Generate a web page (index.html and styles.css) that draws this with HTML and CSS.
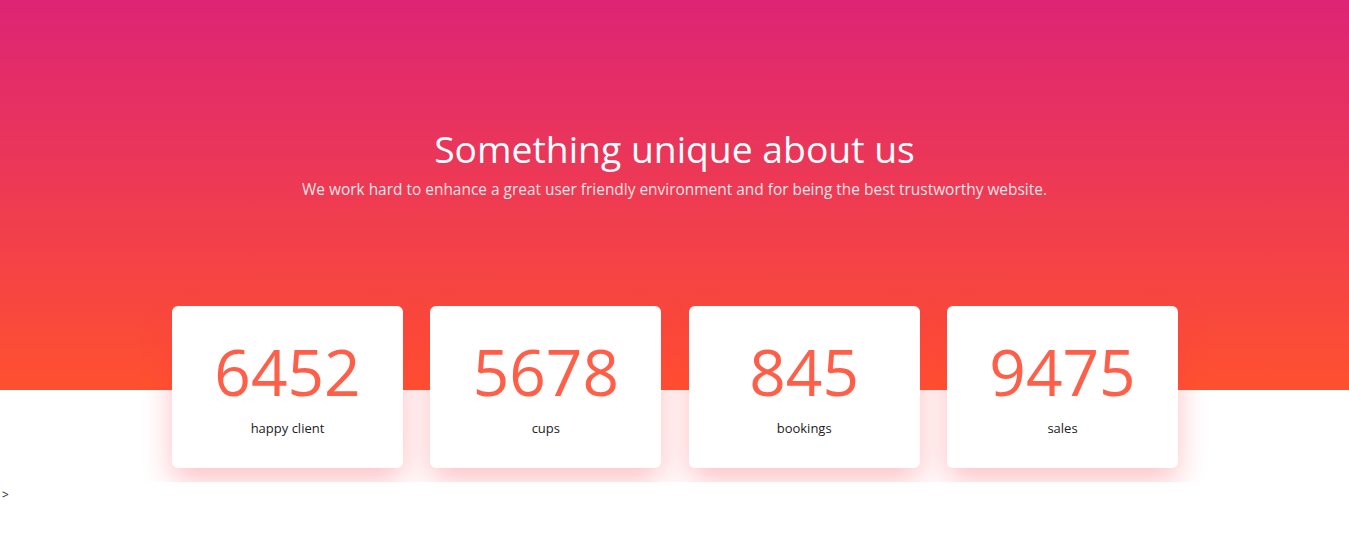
FILE: index.html
```html
<!DOCTYPE html>
<html lang="en">
<head>
<meta charset="utf-8">
<title>Stats</title>
<link rel="stylesheet" href="styles.css">
</head>
<body>
<section class="stats">
  <div class="stats-head">
    <h1 class="stats-title">Something unique about us</h1>
    <p class="stats-sub">We work hard to enhance a great user friendly environment and for being the best trustworthy website.</p>
  </div>
  <div class="stats-cards">
    <div class="card"><div class="card-num">6452</div><div class="card-label">happy client</div></div>
    <div class="card"><div class="card-num">5678</div><div class="card-label">cups</div></div>
    <div class="card"><div class="card-num">845</div><div class="card-label">bookings</div></div>
    <div class="card"><div class="card-num">9475</div><div class="card-label">sales</div></div>
  </div>
</section>
<div class="stray">&gt;</div>
</body>
</html>
```

FILE: styles.css
```css
* { box-sizing: border-box; }
body {
  margin: 0;
  font-family: "Open Sans", "Noto Sans", sans-serif;
  color: #222;
}
.stats {
  height: 482px;
  overflow: hidden;
  background: linear-gradient(to bottom, #dd2476, #ff512f) 0 0 / 100% 390px no-repeat, #fff;
  padding-top: 124px;
}
.stats-head {
  text-align: center;
  color: #fff;
}
.stats-title {
  margin: 0;
  font-size: 37.3px;
  font-weight: 400;
  line-height: 50px;
}
.stats-sub {
  margin: 4px 0 0;
  font-size: 15.45px;
  line-height: 22px;
  color: rgba(255,255,255,0.88);
}
.stats-cards {
  display: flex;
  justify-content: center;
  gap: 27.33px;
  margin-top: 106px;
  padding-left: 1px;
}
.card {
  width: 231px;
  height: 162px;
  background: #fff;
  border-radius: 6px;
  box-shadow: 0 12px 30px rgba(255, 60, 70, 0.32);
  display: flex;
  flex-direction: column;
  align-items: center;
  padding-top: 30px;
}
.card-num {
  font-size: 64px;
  line-height: 72px;
  color: #ff5e48;
  font-weight: 400;
}
.card-label {
  margin-top: 11px;
  font-size: 13px;
  line-height: 18px;
  color: #222;
}
.stray {
  font-size: 12px;
  line-height: 16px;
  padding: 5px 0 0 2px;
  color: #222;
}
```
